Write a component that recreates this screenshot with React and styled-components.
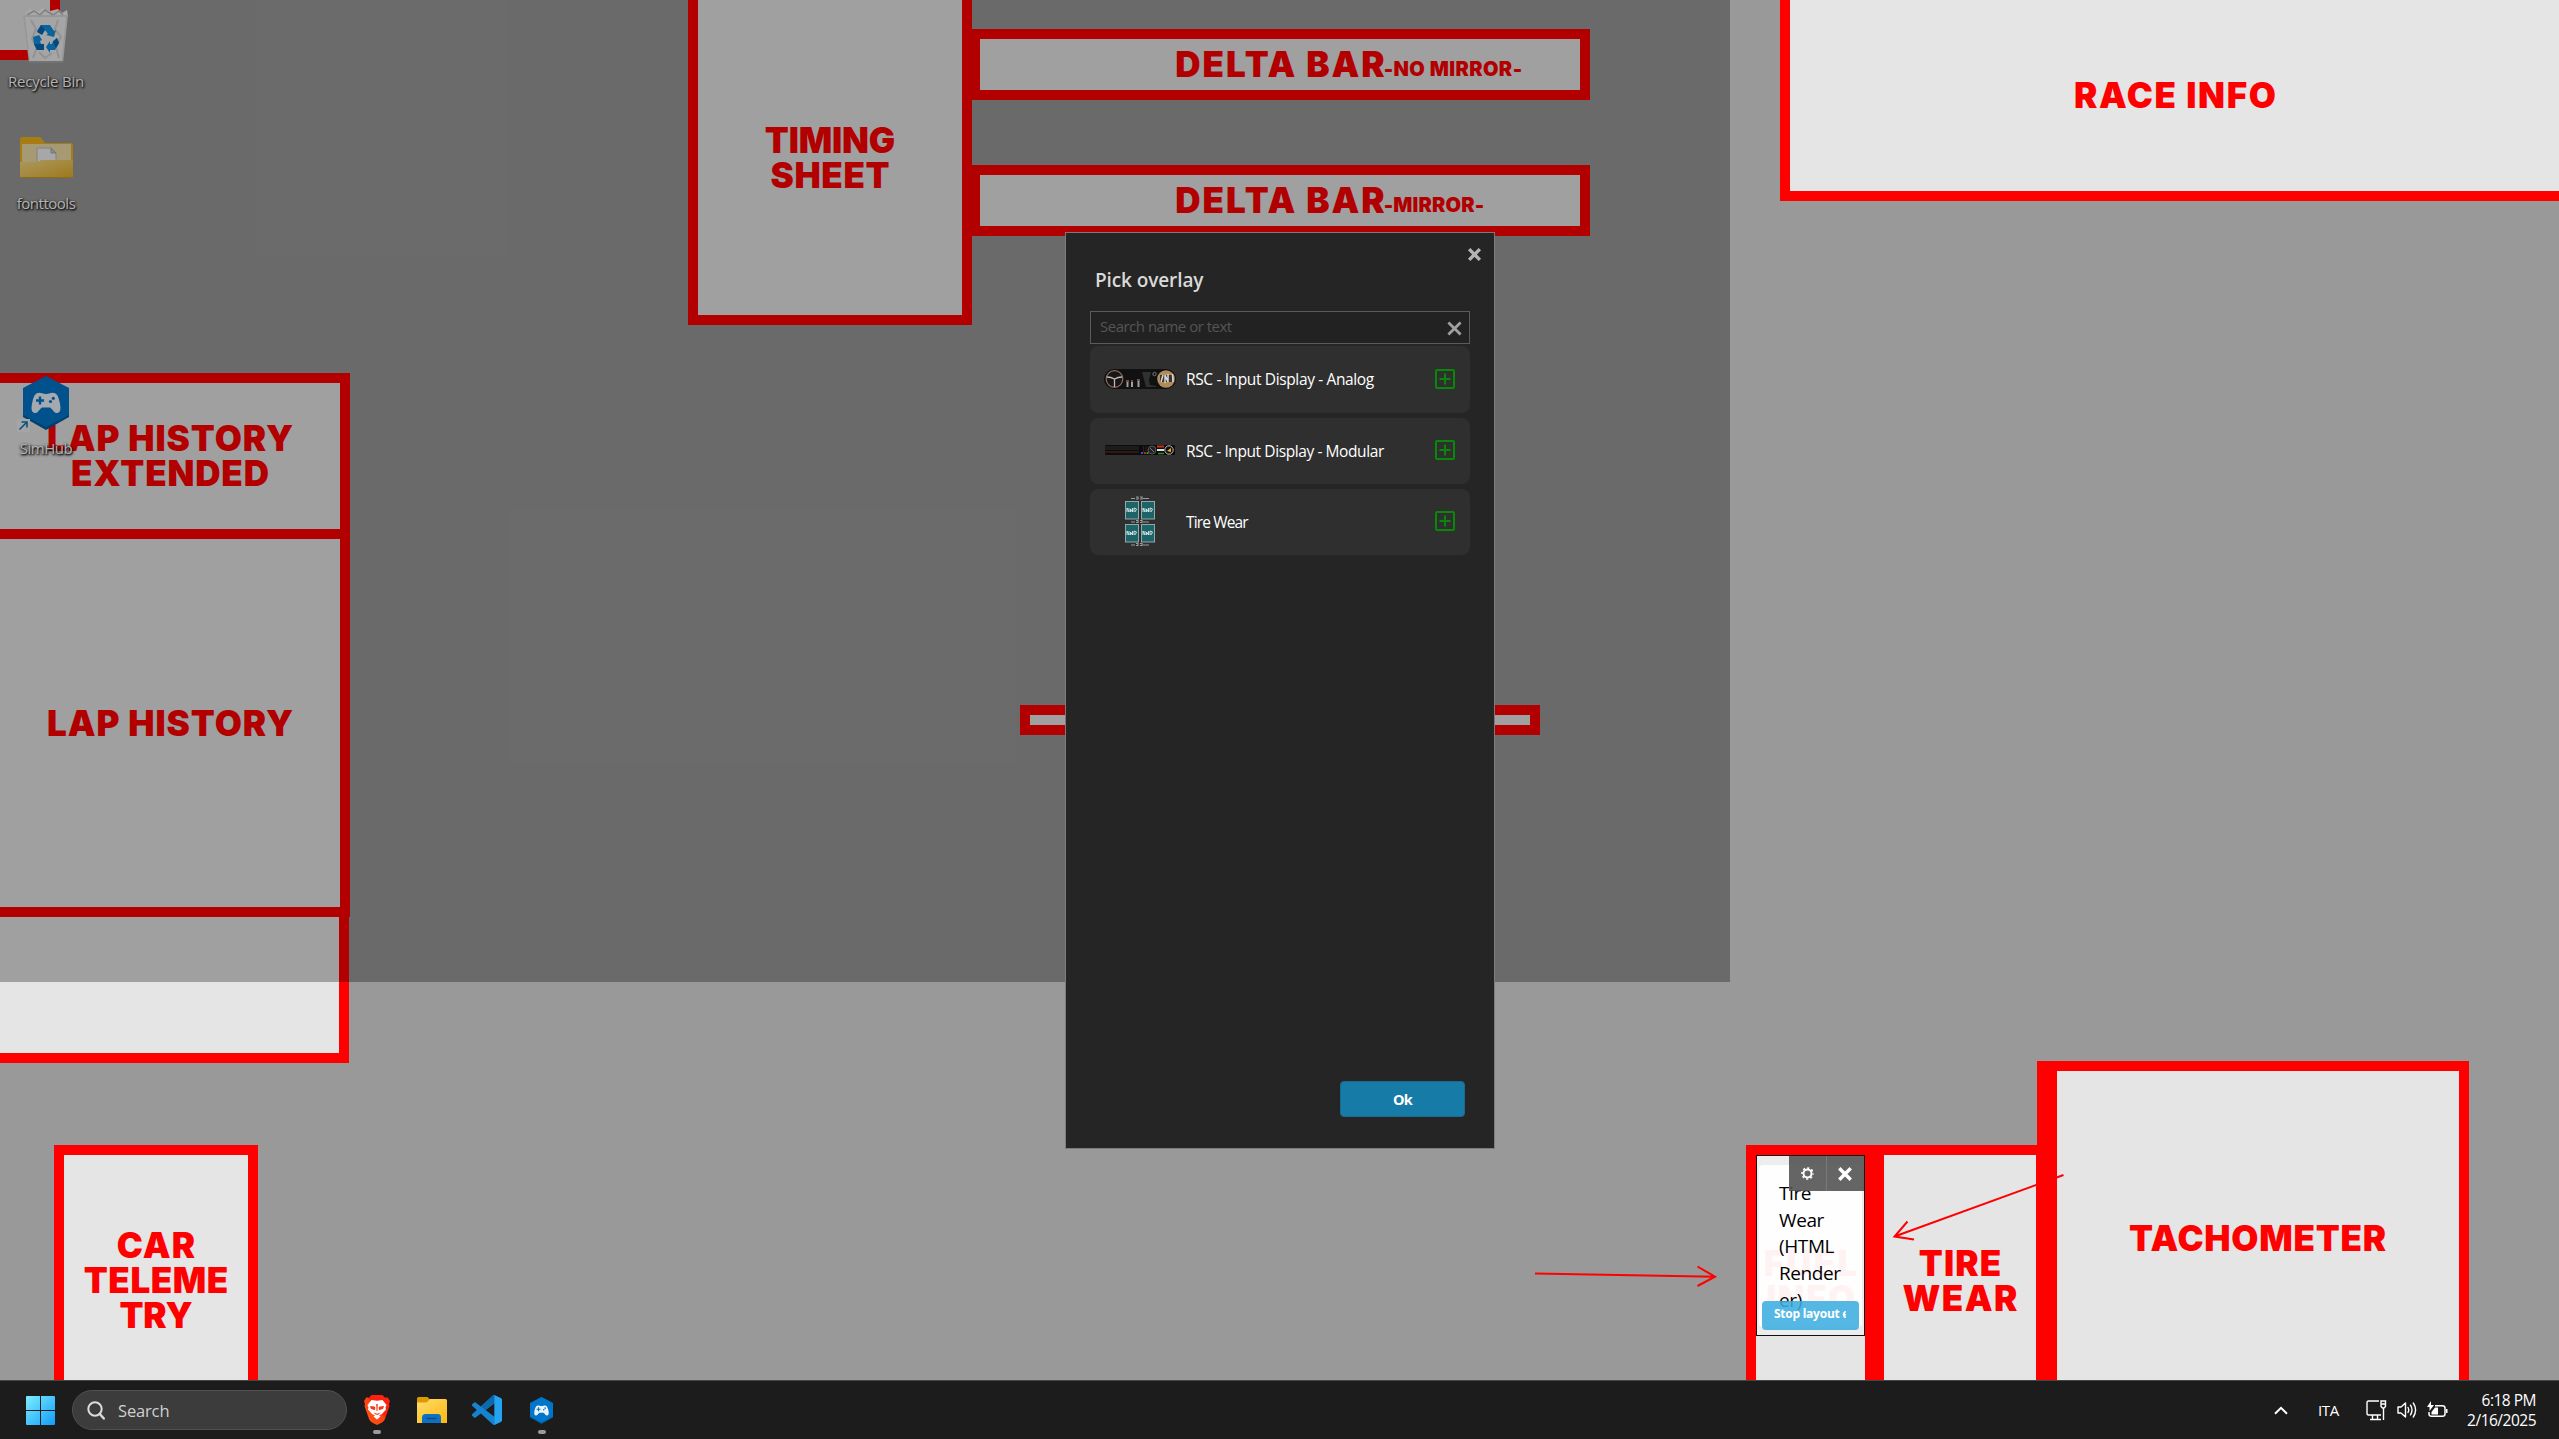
import React from "react";
import styled, { createGlobalStyle } from "styled-components";

const GlobalStyle = createGlobalStyle`
  *, *::before, *::after { box-sizing: border-box; }
  body { margin: 0; background: #999; font-family: "Open Sans", "Noto Sans", sans-serif; }
  svg { display: block; }
  button, input { font: inherit; }
`;

const Desktop = styled.div`
  display: grid;
  grid-template-rows: 1380px 59px;
  width: 2559px;
  height: 1439px;
  overflow: hidden;
`;

const Workspace = styled.main`
  position: relative;
  overflow: hidden;
  background: #999;
`;

/* ---------- wallpaper zones ---------- */

const Zone = styled.section`
  position: absolute;
  left: ${(p) => p.$x}px;
  top: ${(p) => p.$y}px;
  width: ${(p) => p.$w}px;
  height: ${(p) => p.$h}px;
  display: flex;
  flex-direction: column;
  align-items: center;
  justify-content: center;
  border: 10px solid #f00;
  background: #e5e5e5;
  color: #f00;
  font-family: Inter, sans-serif;
  font-weight: 900;
`;

const ZoneLine = styled.span`
  position: relative;
  font-size: 35px;
  line-height: 35px;
  white-space: nowrap;
  letter-spacing: ${(p) => p.$spacing}px;
  margin-right: ${(p) => -p.$spacing}px;
`;

const ZoneSuffix = styled.small`
  position: absolute;
  left: 100%;
  bottom: 0;
  margin-left: -3px;
  font-size: 20px;
  line-height: 26px;
  letter-spacing: ${(p) => p.$spacing}px;
`;

const ZONES = [
  { x: -20, y: -20, w: 80, h: 80, lines: [] },
  { x: 688, y: -10, w: 284, h: 335, lines: [["TIMING", -0.16], ["SHEET", 0.64]] },
  { x: 970, y: 29, w: 620, h: 71, lines: [["DELTA BAR", 1.96]], suffix: ["-NO MIRROR-", 0.41] },
  { x: 970, y: 165, w: 620, h: 71, lines: [["DELTA BAR", 1.96]], suffix: ["-MIRROR-", 0.14] },
  { x: 1780, y: -10, w: 790, h: 211, lines: [["RACE INFO", 1.63]] },
  { x: -10, y: 907, w: 359, h: 156, lines: [] },
  { x: -10, y: 529, w: 360, h: 388, lines: [["LAP HISTORY", 0.95]] },
  { x: -10, y: 373, w: 360, h: 166, lines: [["LAP HISTORY", 0.95], ["EXTENDED", 0.84]] },
  { x: 54, y: 1145, w: 204, h: 271, lines: [["CAR", 1.1], ["TELEME", 0.56], ["TRY", -0.11]] },
  { x: 1020, y: 705, w: 520, h: 30, lines: [] },
  { x: 1746, y: 1145, w: 129, h: 271, lines: [["FUEL", 2.18], ["INFO", 1.48]] },
  { x: 1874, y: 1145, w: 172, h: 271, lines: [["TIRE", 1.14], ["WEAR", 1.45]] },
  { x: 2046, y: 1061, w: 423, h: 355, lines: [["TACHOMETER", 0.76]] },
  { x: 2037, y: 1061, w: 20, h: 355, lines: [] },
];

/* ---------- desktop shortcuts ---------- */

const Shortcut = styled.div`
  position: absolute;
  left: 0;
  top: ${(p) => p.$y}px;
  width: 92px;
  display: flex;
  flex-direction: column;
  align-items: center;
`;

const ShortcutArt = styled.div`
  display: flex;
  align-items: center;
  justify-content: center;
  height: 66px;
`;

const ShortcutLabel = styled.span`
  margin-top: 2px;
  font-size: 15px;
  line-height: 20px;
  letter-spacing: ${(p) => p.$spacing || 0}px;
  color: #fff;
  text-shadow: 1px 1px 2px #000, 0 1px 3px #000;
`;

const Dim = styled.div`
  position: absolute;
  left: 0;
  top: 0;
  width: 1730px;
  height: 982px;
  background: rgba(0, 0, 0, 0.3);
`;

/* ---------- dialog ---------- */

const Dialog = styled.div`
  position: absolute;
  left: 1065px;
  top: 232px;
  width: 430px;
  height: 917px;
  padding: 14px 29px 31px 24px;
  border: 1px solid #7c7c7c;
  background: #252525;
  display: flex;
  flex-direction: column;
`;

const DialogTop = styled.div`
  display: flex;
  justify-content: flex-end;
  height: 12px;
  margin-right: -17px;
`;

const Title = styled.h1`
  margin: 8px 0 0 5px;
  font-size: 19px;
  line-height: 27px;
  font-weight: 600;
  letter-spacing: -0.1px;
  color: #d9d9d9;
`;

const SearchBox = styled.label`
  display: flex;
  align-items: center;
  justify-content: space-between;
  width: 380px;
  height: 33px;
  margin-top: 17px;
  padding: 0 6px 0 9px;
  border: 1px solid #5a5a5a;
  background: #222;
  font-size: 15px;
  letter-spacing: -0.5px;
  color: #555;

  span { padding-bottom: 3px; }
  svg { margin-top: 2px; }
`;

const OverlayList = styled.ul`
  list-style: none;
  width: 380px;
  margin: 2px 0 0;
  padding: 0;
  display: flex;
  flex-direction: column;
  gap: 5px;
`;

const OverlayRow = styled.li`
  display: grid;
  grid-template-columns: 72px 1fr 20px;
  column-gap: 10px;
  align-items: center;
  height: 66px;
  padding: 0 15px 2px 14px;
  border-radius: 8px;
  background: #2f2f2f;
  color: #fff;

  &:first-child { height: 67px; }
`;

const OverlayName = styled.span`
  font-size: 15.5px;
  line-height: 22px;
  white-space: nowrap;
  letter-spacing: ${(p) => p.$spacing}px;
  padding-top: ${(p) => p.$drop || 0}px;
`;

const DialogFooter = styled.div`
  display: flex;
  justify-content: flex-end;
  margin-top: auto;
`;

const OkButton = styled.button`
  width: 125px;
  height: 36px;
  padding: 0;
  border: 1px solid #1d6a90;
  border-radius: 4px;
  background: #177ba8;
  color: #fff;
  font-size: 14.5px;
  font-weight: 700;
  letter-spacing: -0.8px;
`;

/* ---------- overlay widget ---------- */

const Widget = styled.div`
  position: absolute;
  left: 1756px;
  top: 1155px;
  width: 109px;
  height: 181px;
  padding: 9px 2px 8px;
  border: 1px solid #111;
  background: rgba(255, 255, 255, 0.3);
`;

const WidgetCard = styled.div`
  height: 162px;
  padding: 15px 0 0 20px;
  border-radius: 4px;
  background: rgba(255, 255, 255, 0.93);
  color: #000;
  font-size: 19px;
  line-height: 26.700px;
  letter-spacing: -0.4px;
  white-space: pre-line;
`;

const WidgetTools = styled.div`
  position: absolute;
  top: 0;
  right: 0;
  display: flex;
  width: 75px;
  height: 35px;
  background: rgba(80, 80, 80, 0.88);
`;

const WidgetTool = styled.span`
  flex: 1;
  display: flex;
  align-items: center;
  justify-content: center;

  & + & { border-left: 1px solid #7a7a7a; padding-right: 1px; }
`;

const StopButton = styled.div`
  position: absolute;
  left: 5px;
  bottom: 5px;
  width: 97px;
  height: 29px;
  padding: 0 13px 0 12px;
  border-radius: 4px;
  background: rgba(62, 174, 224, 0.88);
  color: #fff;
  font-size: 12px;
  font-weight: 700;
  line-height: 25px;
  letter-spacing: -0.25px;
`;

const StopText = styled.span`
  display: block;
  overflow: hidden;
  white-space: nowrap;
`;

const Arrows = styled.svg`
  position: absolute;
  left: 1520px;
  top: 1160px;
`;

/* ---------- taskbar ---------- */

const Taskbar = styled.footer`
  display: flex;
  align-items: center;
  justify-content: space-between;
  padding: 0 23px 0 26px;
  border-top: 1px solid #444;
  background: #1c1c1c;
  color: #fff;
`;

const TaskGroup = styled.div`
  display: flex;
  align-items: center;
  height: 58px;
`;

const SearchPill = styled.div`
  display: flex;
  align-items: center;
  gap: 13px;
  width: 275px;
  height: 40px;
  margin: 0 17px 0 17px;
  padding-left: 14px;
  border: 1px solid #505050;
  border-radius: 20px;
  background: #3c3c3c;
  color: #d0d0d0;
  font-size: 16.5px;
  letter-spacing: -0.15px;
`;

const TaskApp = styled.div`
  display: flex;
  flex-direction: column;
  align-items: center;
  justify-content: flex-end;
  width: ${(p) => p.$w || 55}px;
  height: 58px;
  padding-bottom: 4px;
`;

const TaskArt = styled.span`
  display: flex;
  align-items: center;
  justify-content: center;
  height: 32px;
`;

const Running = styled.i`
  width: 8px;
  height: 4px;
  margin: 4px 0 1px;
  border-radius: 2px;
  background: ${(p) => (p.$on ? "#9a9a9a" : "transparent")};
`;

const Language = styled.span`
  margin: 0 27px 0 30px;
  font-size: 15px;
  letter-spacing: -0.3px;
`;

const TrayIcons = styled.div`
  display: flex;
  align-items: center;
  gap: 10px;
`;

const Clock = styled.time`
  display: flex;
  flex-direction: column;
  align-items: flex-end;
  width: 88px;
  font-size: 15.5px;
  line-height: 20px;
  letter-spacing: -0.5px;
`;

/* ---------- drawings ---------- */

const Cross = ({ size, width, color }) => (
  <svg width={size} height={size} viewBox="0 0 14 14">
    <path d="M2 2l10 10M12 2L2 12" stroke={color} strokeWidth={width} fill="none" />
  </svg>
);

const AddIcon = () => (
  <svg width="20" height="20" viewBox="0 0 20 20" fill="none" stroke="#078807" strokeWidth="2">
    <rect x="1" y="1" width="18" height="18" rx="1" />
    <path d="M10 4.500v11M4.500 10h11" />
  </svg>
);

const Pad = ({ fill, hole }) => (
  <g>
    <path
      fill={fill}
      d="M8 .3C10 .3 11 1.500 14.500 1.500S19 .3 21 .3c4 0 5.500 2.700 7 8.700 1.500 6 1.500 11-2 11.500-3.500.5-4.500-3.500-7.500-5.500h-8c-3 2-4 6-7.500 5.500C-.5 20-.5 15 1 9 2.500 3 4 .3 8 .3z"
    />
    <path d="M8.500 4v8M4.500 8h8" stroke={hole} strokeWidth="2.400" />
    <circle cx="21.800" cy="5.800" r="1.600" fill={hole} />
    <circle cx="19" cy="9" r="1.600" fill={hole} />
  </g>
);

const SimHubIcon = ({ w, h }) => (
  <svg width={w} height={h} viewBox="0 0 46 54">
    <path d="M23 0l23 13v28L23 54 0 41V13z" fill="#005c9e" />
    <path d="M23 0l23 12v27L23 51 0 39V12z" fill="#0075c9" />
    <g transform="translate(8.500 16.500)">
      <Pad fill="#eaf3fa" hole="#0075c9" />
    </g>
  </svg>
);

const ShortcutBadge = styled.svg`
  position: absolute;
  left: 17px;
  top: 49px;
`;

const RecycleBin = () => (
  <svg width="46" height="56" viewBox="0 0 46 56">
    <path d="M1 7l6-6 8 2 5-3 7 3 8-2 4 4 5-3 1 6z" fill="#f3f3f3" />
    <path d="M4 7l7-4 6 4 5-5 8 5 6-4 4 4" fill="none" stroke="#b8b8b8" strokeWidth="1.500" />
    <path d="M0 7h45l-5 48H6z" fill="#d9d9d9" />
    <path d="M2 9h41l-4.500 44H7z" fill="#ececec" />
    <path d="M8 12l5 9-4 10 5 8-4 11M35 12l-3 9 6 8-5 10 3 11M16 44l6 6 7-5" fill="none" stroke="#d2d2d2" strokeWidth="2" />
    <path d="M6 53h34v2H6z" fill="#a5a5a5" />
    <g fill="#0f8fe0">
      <path d="M18 17h9l4 6 2-1-2 7-8-2 2-1-3-4-3 4-5-3z" />
      <path d="M16 27l-6 2 1 7 3 6h7v-6h-3l-1-3 2-1z" />
      <path d="M34 30l2 5-4 7h-5v3l-4-6 4-6v3h2l1-3z" />
    </g>
    <path d="M18 17l-4 7 5 3 3-5zM11 36l3 6h7v-6h-4zM34 30l2 5-3 5-3-6z" fill="#0668b5" />
  </svg>
);

const FolderLarge = () => (
  <svg width="53" height="42" viewBox="0 0 53 42">
    <defs>
      <linearGradient id="front" x1="0" y1="0" x2="1" y2="1">
        <stop offset="0" stopColor="#f6db86" />
        <stop offset="1" stopColor="#e2ad2a" />
      </linearGradient>
    </defs>
    <path d="M2 0h17q2 0 3 2l3 4h25q3 0 3 3v29H0V2Q0 0 2 0z" fill="#f0b21c" />
    <path d="M2 7h49v22H2z" fill="#f0dba2" />
    <path d="M17 11h14l5 5v13H17z" fill="#efefef" stroke="#bbb" />
    <path d="M31 11v5h5z" fill="#ccc" stroke="#999" strokeWidth=".8" />
    <path d="M0 25h16q3 0 5-2h32v16q0 2-2 2H2q-2 0-2-2z" fill="url(#front)" />
    <path d="M1 40.500h51" stroke="#cb9820" />
  </svg>
);

const WindowsLogo = () => (
  <svg width="29" height="29" viewBox="0 0 29 29">
    <defs>
      <linearGradient id="win" x1="0" y1="0" x2="29" y2="29" gradientUnits="userSpaceOnUse">
        <stop offset="0" stopColor="#7eeeff" />
        <stop offset="1" stopColor="#109cf8" />
      </linearGradient>
    </defs>
    <path fill="url(#win)" d="M1 0h13v14H0V1q0-1 1-1zM15 0h13q1 0 1 1v13H15zM0 15h14v14H1q-1 0-1-1zM15 15h14v13q0 1-1 1H15z" />
  </svg>
);

const Magnifier = () => (
  <svg width="18" height="19" viewBox="0 0 18 19" fill="none" stroke="#dcdcdc" strokeWidth="2" strokeLinecap="round">
    <circle cx="8" cy="8" r="6.700" />
    <path d="M12.800 13l4 4.500" strokeWidth="2.400" />
  </svg>
);

const Brave = () => (
  <svg width="26" height="30" viewBox="0 0 26 30">
    <defs>
      <linearGradient id="brave" x1="0" y1="1" x2="1" y2="0">
        <stop offset="0" stopColor="#ff5a10" />
        <stop offset=".5" stopColor="#ff4012" />
        <stop offset=".55" stopColor="#ff2010" />
      </linearGradient>
    </defs>
    <path d="M7.500 0h11l2.500 2.700 2.500-.4L26 6l-1 3 .5 2-4.500 13q-1 2-3 3.500L13 30l-5-2.500Q6 26 5 24L.5 11 1 9 0 6l2.500-3.700 2.500.4z" fill="url(#brave)" />
    <path d="M7.500 5l5.500.8L18.500 5l4 5-1 2.500.5 2-4 4.500-3 1.500 1.500 1-3.500 3-3.500-3 1.500-1-3-1.500-4-4.500.5-2-1-2.500z" fill="#fff" />
    <path d="M6 11l4.500.6 1 1.200-.7 2.500-4-1.600zM20 11l-4.500.6-1 1.200.7 2.500 4-1.600zM12.200 9h1.600l-.3 7h-1zM9.500 17.500l3.500 1.200 3.500-1.200-2.300 2.300h-2.400z" fill="#f43a18" />
  </svg>
);

const FolderSmall = () => (
  <svg width="30" height="26" viewBox="0 0 30 26">
    <defs>
      <linearGradient id="fs" x1="0" y1="0" x2="1" y2="1">
        <stop offset="0" stopColor="#ffdc6b" />
        <stop offset="1" stopColor="#fbb912" />
      </linearGradient>
    </defs>
    <path d="M1.500 0h9l3 3-3 4H0V1.500Q0 0 1.500 0z" fill="#dd9a00" />
    <path d="M0 5.500h9.500L13 2h15.500Q30 2 30 3.500V26H0z" fill="url(#fs)" />
    <path d="M5 26v-5.500Q5 17 8.500 17h12.500q3 0 3 3.500V26z" fill="#0f6fc0" />
    <path d="M9.500 21.500h10" stroke="#0a4a86" strokeWidth="1.300" />
  </svg>
);

const VsCode = () => (
  <svg width="30" height="30" viewBox="0 0 24 24">
    <path
      fill="#1583cf"
      d="M23.150 2.587L18.210.21a1.494 1.494 0 0 0-1.705.29l-9.460 8.630-4.120-3.128a.999.999 0 0 0-1.276.057L.327 7.261A1 1 0 0 0 .326 8.740L3.899 12 .326 15.260a1 1 0 0 0 .001 1.479L1.650 17.940a.999.999 0 0 0 1.276.057l4.120-3.128 9.460 8.630a1.492 1.492 0 0 0 1.704.29l4.942-2.377A1.500 1.500 0 0 0 24 20.060V3.939a1.500 1.500 0 0 0-.85-1.352zm-5.146 14.861L10.826 12l7.178-5.448v10.896z"
    />
    <path fill="#0b69b0" d="M16.500.5L7.045 9.130 10.826 12l7.178-5.448V.2z" />
    <path fill="#24a4f0" d="M18 .15l5.150 2.437q.85.45.85 1.352V20.060q0 .9-.85 1.350L18 23.850z" />
  </svg>
);

const Gear = () => (
  <svg width="13" height="13" viewBox="0 0 13 13" fill="none" stroke="#fff">
    <circle cx="6.500" cy="6.500" r="4" strokeWidth="1.900" />
    <circle cx="6.500" cy="6.500" r="5.500" strokeWidth="1.600" strokeDasharray="2.160 2.160" strokeDashoffset="1" />
  </svg>
);

const Chevron = () => (
  <svg width="14" height="9" viewBox="0 0 14 9">
    <path d="M1 7.800L7 1.800l6 6" fill="none" stroke="#fff" strokeWidth="2" />
  </svg>
);

const NetworkIcon = () => (
  <svg width="21" height="21" viewBox="0 0 21 21" fill="none" stroke="#fff" strokeWidth="1.400">
    <path d="M13 1H2.500Q1 1 1 2.500v11Q1 15 2.500 15H15M6.500 15v4M11.500 15v4M4 19.500h11" />
    <path d="M15 1h4.500v5.500L18 8h-1.500L15 6.500zM15 4h4.500M17.500 8v12" />
  </svg>
);

const SpeakerIcon = () => (
  <svg width="20" height="18" viewBox="0 0 20 18" fill="none" stroke="#fff" strokeWidth="1.400" strokeLinecap="round">
    <path d="M1 6h3l4.500-4v14L4 12H1z" strokeLinejoin="round" />
    <path d="M11 6.500q1.500 2.500 0 5M13.500 4.200q3 4.800 0 9.600M16.300 2q4.600 7 0 14" />
  </svg>
);

const BatteryIcon = () => (
  <svg width="21" height="18" viewBox="0 0 21 18">
    <path d="M8 4.700h7.500Q18 4.700 18 7v6q0 2.300-2.500 2.300h-11Q2 15.300 2 13v-2" fill="none" stroke="#fff" strokeWidth="1.500" />
    <path d="M19 8h1.500v4H19z" fill="#fff" />
    <path d="M4.500 13.500V11L8 6.500h3v7zM4 0v4h3L2.500 10V6H0z" fill="#fff" />
  </svg>
);

const AnalogThumb = () => (
  <svg width="72" height="20" viewBox="0 0 72 20">
    <rect width="72" height="20" rx="10" fill="#111" />
    <circle cx="10.500" cy="10" r="8.300" fill="#1a1616" stroke="#8f6c65" strokeWidth="1.200" />
    <path d="M3 8q4 0 7.500 2Q14 8 18 8M10.500 10v8" stroke="#bbb" strokeWidth="1.300" fill="none" />
    <path d="M23.500 11v7M28 11v7M34.500 10v8" stroke="#a0a0a0" strokeWidth="2" />
    <path d="M23.500 11v2M28 11v2M34.500 10v2" stroke="#7d4a40" strokeWidth="2" />
    <path d="M38 3h9l-2 8 1 5 6 1v1H42z" fill="#303030" />
    <circle cx="50.500" cy="5" r="1.700" fill="none" stroke="#777" />
    <circle cx="62" cy="10" r="8.800" fill="#b08c5c" />
    <path d="M56 6h12v7H56z" fill="#3a3430" />
    <path d="M57 13l2-7M61 14V6l3 7V5M68.500 5l.5 8" stroke="#d8d8d8" strokeWidth="1.500" fill="none" />
  </svg>
);

const ModularThumb = () => (
  <svg width="72" height="10" viewBox="0 0 72 10">
    <rect x="1" width="70" height="10" rx="1" fill="#0c0c0c" />
    <path d="M1 7h34" stroke="#5c2018" />
    <path d="M1 3h34" stroke="#1c1c1c" strokeWidth="4" />
    <path d="M37 7h2v2h-2z" fill="#2858d0" />
    <path d="M40 7h2v2h-2z" fill="#c22" />
    <path d="M42.500 7h2v2h-2z" fill="#2a2" />
    <path d="M39.500 1v7M42 1v7" stroke="#3a1a1a" />
    <circle cx="48" cy="5" r="4" fill="#222" stroke="#555" />
    <path d="M46 3l4 4" stroke="#777" />
    <path d="M53 1.500h7" stroke="#c4321c" strokeWidth="2" />
    <path d="M53 5h7" stroke="#ddd" strokeWidth="2" />
    <path d="M54 8.500h6" stroke="#2c8a2c" strokeWidth="1.500" />
    <circle cx="65" cy="5" r="4.200" fill="#111" stroke="#ccc" strokeWidth=".9" />
    <path d="M63 6l4-3v4z" fill="#f6b21a" />
  </svg>
);

const TireThumb = () => (
  <svg width="72" height="51" viewBox="0 0 72 51">
    {[5, 28].map((y) =>
      [21, 37].map((x) => (
        <g key={`${x}-${y}`}>
          <rect x={x + 0.5} y={y + 0.5} width="13" height="17.500" fill="#1d6468" stroke="#91a9a9" />
          <path d={`M${x + 2} ${y + 11}v-4l2 4v-4M${x + 5.5} ${y + 11}v-3l2 3v-4M${x + 9} ${y + 11}v-4l2.500 1-1.500 3`} stroke="#dcebeb" strokeWidth=".9" fill="none" />
        </g>
      ))
    )}
    {[1.5, 25, 48].map((y) => (
      <path key={y} d={`M27 ${y + 1}h4m1-1.500h2v2h-2m4-2h2v2h-2m3-.500h6`} stroke="#9c9c9c" strokeWidth="1.200" fill="none" />
    ))}
  </svg>
);

const OVERLAYS = [
  { name: "RSC - Input Display - Analog", Thumb: AnalogThumb, spacing: -0.37, drop: 1 },
  { name: "RSC - Input Display - Modular", Thumb: ModularThumb, spacing: -0.41, drop: 1 },
  { name: "Tire Wear", Thumb: TireThumb, spacing: -0.85, drop: 2 },
];

export default function App() {
  return (
    <Desktop>
      <GlobalStyle />
      <Workspace>
        {ZONES.map((z) => (
          <Zone key={`${z.x}:${z.y}`} $x={z.x} $y={z.y} $w={z.w} $h={z.h}>
            {z.lines.map(([text, spacing]) => (
              <ZoneLine key={text} $spacing={spacing}>
                {text}
                {z.suffix && <ZoneSuffix $spacing={z.suffix[1]}>{z.suffix[0]}</ZoneSuffix>}
              </ZoneLine>
            ))}
          </Zone>
        ))}

        <Shortcut $y={3}>
          <ShortcutArt><RecycleBin /></ShortcutArt>
          <ShortcutLabel $spacing={-0.21}>Recycle Bin</ShortcutLabel>
        </Shortcut>
        <Shortcut $y={125}>
          <ShortcutArt><FolderLarge /></ShortcutArt>
          <ShortcutLabel $spacing={-0.47}>fonttools</ShortcutLabel>
        </Shortcut>
        <Shortcut $y={370}>
          <ShortcutArt><SimHubIcon w={46} h={54} /></ShortcutArt>
          <ShortcutBadge width="13" height="13" viewBox="0 0 13 13">
            <rect width="13" height="13" fill="#ededed" />
            <path d="M2.500 10.500L9.500 3.500M4.500 3h5.500v5.500" stroke="#0b75c0" strokeWidth="1.600" fill="none" />
          </ShortcutBadge>
          <ShortcutLabel $spacing={-0.5}>SimHub</ShortcutLabel>
        </Shortcut>

        <Dim />

        <Dialog>
          <DialogTop><Cross size={15} width={3.2} color="#b4b4b4" /></DialogTop>
          <Title>Pick overlay</Title>
          <SearchBox>
            <span>Search name or text</span>
            <Cross size={17} width={2.3} color="#a0a0a0" />
          </SearchBox>
          <OverlayList>
            {OVERLAYS.map(({ name, Thumb, spacing, drop }) => (
              <OverlayRow key={name}>
                <Thumb />
                <OverlayName $spacing={spacing} $drop={drop}>{name}</OverlayName>
                <AddIcon />
              </OverlayRow>
            ))}
          </OverlayList>
          <DialogFooter><OkButton>Ok</OkButton></DialogFooter>
        </Dialog>

        <Widget>
          <WidgetCard>{"Tire\nWear\n(HTML\nRender\ner)"}</WidgetCard>
          <WidgetTools>
            <WidgetTool><Gear /></WidgetTool>
            <WidgetTool><Cross size={16} width={3} color="#fff" /></WidgetTool>
          </WidgetTools>
          <StopButton><StopText>Stop layout edit</StopText></StopButton>
        </Widget>

        <Arrows width="560" height="140" viewBox="0 0 560 140" fill="none" stroke="#f00" strokeWidth="2">
          <path d="M15 113.500L195 116.700M177.500 106.500l17.500 10.200L177.500 126" />
          <path d="M543.500 15L374.500 76.500M387.500 61.500L374.500 76.500l19.500 3" />
        </Arrows>
      </Workspace>

      <Taskbar>
        <TaskGroup>
          <WindowsLogo />
          <SearchPill><Magnifier />Search</SearchPill>
          <TaskApp $w={26}>
            <TaskArt><Brave /></TaskArt>
            <Running $on />
          </TaskApp>
          <TaskApp $w={84}>
            <TaskArt><FolderSmall /></TaskArt>
            <Running />
          </TaskApp>
          <TaskApp $w={26}>
            <TaskArt><VsCode /></TaskArt>
            <Running />
          </TaskApp>
          <TaskApp $w={83}>
            <TaskArt><SimHubIcon w={23} h={27} /></TaskArt>
            <Running $on />
          </TaskApp>
        </TaskGroup>
        <TaskGroup>
          <Chevron />
          <Language>ITA</Language>
          <TrayIcons>
            <NetworkIcon />
            <SpeakerIcon />
            <BatteryIcon />
          </TrayIcons>
          <Clock>
            <span>6:18 PM</span>
            <span>2/16/2025</span>
          </Clock>
        </TaskGroup>
      </Taskbar>
    </Desktop>
  );
}
